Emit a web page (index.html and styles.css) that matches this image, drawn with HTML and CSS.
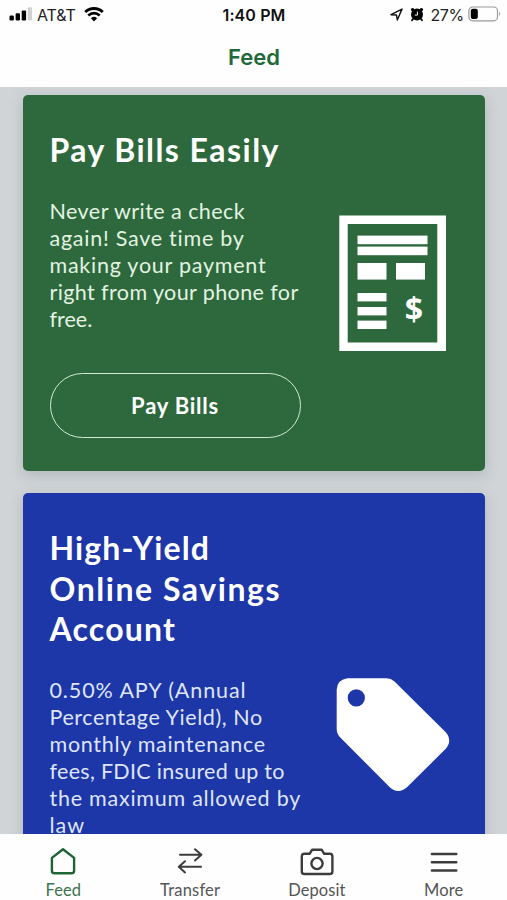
FILE: index.html
```html
<!DOCTYPE html>
<html lang="en">
<head>
    <meta charset="UTF-8">
    <meta name="viewport" content="width=device-width, initial-scale=1.0">
    <title>Feed</title>
    <link rel="stylesheet" href="styles.css">
</head>
<body>

<div class="app">
    <header class="header">
        <div class="status-bar">
            <div class="status-left">
                <svg class="signal" width="24" height="14" viewBox="0 0 24 14">
                    <rect x="0.5" y="8.5" width="4.4" height="5" rx="1.2"/>
                    <rect x="6.6" y="6.2" width="4.4" height="7.3" rx="1.2"/>
                    <rect x="12.7" y="3.4" width="4.4" height="10.1" rx="1.2"/>
                    <rect x="18.8" y="0.3" width="4.2" height="13.2" rx="1.2" fill="#d2d2d2"/>
                </svg>
                <span class="carrier">AT&amp;T</span>
                <svg class="wifi" width="20" height="15" viewBox="0 0 20 15">
                    <path d="M1.2 5.1A12.6 12.6 0 0 1 18.8 5.1" fill="none" stroke="#000" stroke-width="2.8"/>
                    <path d="M4.3 8.5A8.1 8.1 0 0 1 15.7 8.5" fill="none" stroke="#000" stroke-width="2.6"/>
                    <path d="M10 14.4L6.9 11.2A4.5 4.5 0 0 1 13.1 11.2Z"/>
                </svg>
            </div>
            <div class="clock">1:40 PM</div>
            <div class="status-right">
                <svg width="13" height="13" viewBox="0 0 13 13">
                    <path d="M1 6.7L12 1.1L7.3 12L6.5 7Z" fill="none" stroke="#111" stroke-width="1.4" stroke-linejoin="round"/>
                </svg>
                <svg class="alarm" width="14" height="15" viewBox="0 0 14 15">
                    <circle cx="7" cy="7.6" r="6"/>
                    <circle cx="2.6" cy="2.6" r="1.7"/>
                    <circle cx="11.4" cy="2.6" r="1.7"/>
                    <path d="M3 12L2 13.2M11 12L12 13.2" stroke="#000" stroke-width="1.8" stroke-linecap="round"/>
                    <path d="M7.4 4.6V8.1H4.8" fill="none" stroke="#fff" stroke-width="1"/>
                </svg>
                <span class="percent">27%</span>
                <svg class="battery" width="34" height="16" viewBox="0 0 34 16">
                    <rect x="0.9" y="1" width="28.6" height="13.8" rx="3.8" fill="none" stroke="#999" stroke-width="1.2"/>
                    <rect x="2.8" y="2.8" width="7" height="10.2" rx="2"/>
                    <path d="M31.3 5.6Q33.2 7.9 31.3 10.2Z" fill="#999"/>
                </svg>
            </div>
        </div>
        <h1 class="page-title">Feed</h1>
    </header>

    <main class="feed">
        <section class="card card-green">
            <div class="card-content">
                <h2><span class="t1">Pay Bills Easily</span></h2>
                <p>
                    <span class="a1">Never write a check</span><br>
                    <span class="a2">again! Save time by</span><br>
                    <span class="a3">making your payment</span><br>
                    <span class="a4">right from your phone for</span><br>
                    <span class="a5">free.</span>
                </p>
                <button class="btn" type="button">Pay Bills</button>
            </div>
            <div class="card-icon">
                <svg class="bill" width="108" height="136" viewBox="0 0 108 136">
                    <g fill="#fff">
                        <path fill-rule="evenodd" d="M0.3 0.6H107V136H0.3ZM8.7 9V127.6H98.3V9Z"/>
                        <rect x="18.5" y="20.6" width="70" height="8.6"/>
                        <rect x="18.5" y="31.6" width="70" height="8.6"/>
                        <rect x="18.5" y="48" width="29" height="16.6"/>
                        <rect x="57" y="48" width="29" height="16.6"/>
                        <rect x="18.5" y="78" width="29" height="8.4"/>
                        <rect x="18.5" y="92" width="29" height="8.4"/>
                        <rect x="18.5" y="105.6" width="29" height="8.4"/>
                    </g>
                    <text class="dollar" x="75" y="105.5" text-anchor="middle">$</text>
                </svg>
            </div>
        </section>

        <section class="card card-blue">
            <div class="card-content">
                <h2>
                    <span class="t2">High-Yield</span><br>
                    <span class="t3">Online Savings</span><br>
                    <span class="t4">Account</span>
                </h2>
                <p>
                    <span class="b1">0.50% APY (Annual</span><br>
                    <span class="b2">Percentage Yield), No</span><br>
                    <span class="b3">monthly maintenance</span><br>
                    <span class="b4">fees, FDIC insured up to</span><br>
                    <span class="b5">the maximum allowed by</span><br>
                    <span class="b6">law</span>
                </p>
            </div>
            <div class="card-icon">
                <svg class="tag" width="114" height="114" viewBox="0 0 114 114">
                    <path fill="#fff" fill-rule="evenodd" d="M11.5 0.3H50.5Q55 0.3 58.5 3.5L109.5 54Q113.2 58 113.2 62.5Q113.2 67 109.5 71L71 109.3Q67 113 62.3 113Q57.5 113 53.8 109.3L3.8 59Q0.7 55.8 0.7 51V11.5Q1.5 1.5 11.5 0.3ZM20.3 11.3A8.6 8.6 0 1 0 20.3 28.5A8.6 8.6 0 1 0 20.3 11.3Z"/>
                </svg>
            </div>
        </section>
    </main>

    <nav class="tab-bar">
        <a class="tab active">
            <svg width="32" height="32" viewBox="0 0 32 32">
                <path d="M4.9 11.9L16 3.2L27.1 11.9V24.7Q27.1 27.3 24.5 27.3H7.5Q4.9 27.3 4.9 24.7Z"/>
            </svg>
            <span>Feed</span>
        </a>
        <a class="tab">
            <svg class="thin" width="32" height="32" viewBox="0 0 32 32">
                <path d="M6 8.8H27.2M21 3.2L27.4 8.8L21 14.6M27 20.8H5M11 15.2L4.8 20.8L11 26.4"/>
            </svg>
            <span class="wide">Transfer</span>
        </a>
        <a class="tab">
            <svg width="34" height="32" viewBox="0 0 34 32">
                <path d="M4.4 7.8H9.6L12.2 3.7H21.6L24.2 7.8H29.8Q32.4 7.8 32.4 10.4V25.4Q32.4 28 29.8 28H4.4Q1.8 28 1.8 25.4V10.4Q1.8 7.8 4.4 7.8Z"/>
                <circle cx="17" cy="17.5" r="5.6"/>
            </svg>
            <span>Deposit</span>
        </a>
        <a class="tab">
            <svg width="32" height="32" viewBox="0 0 32 32">
                <path d="M3.9 8H28.3M3.9 16.2H28.3M3.9 24.5H28.3"/>
            </svg>
            <span>More</span>
        </a>
    </nav>
</div>

</body>
</html>
```
FILE: styles.css
```css
* {
    box-sizing: border-box;
}
body {
    margin: 0;
    font-family: 'Lato', 'Open Sans', sans-serif;
    background-color: #fff;
}
.app {
    display: flex;
    flex-direction: column;
    height: 900px;
    overflow: hidden;
}

/* header */
.header {
    flex: none;
    height: 87px;
    background-color: #fefefe;
    font-family: 'Inter', sans-serif;
}
.status-bar {
    display: grid;
    grid-template-columns: 1fr auto 1fr;
    align-items: center;
    height: 29px;
    padding: 0 5px 0 9px;
    font-size: 16px;
    color: #222;
}
.status-left,
.status-right {
    display: flex;
    align-items: center;
}
.status-right {
    justify-content: flex-end;
}
.signal {
    margin-bottom: 1px;
}
.carrier {
    margin: 0 8px 0 4px;
    letter-spacing: -0.1px;
}
.wifi {
    margin-bottom: 1px;
}
.clock {
    font-weight: 600;
    letter-spacing: 0.1px;
    margin-right: 3px;
    color: #111;
}
.alarm {
    margin: 0 6px 1px 7px;
}
.percent {
    margin-right: 4px;
    letter-spacing: -0.3px;
}
.battery {
    margin-bottom: 1px;
}
.page-title {
    margin: 14px 0 0 1px;
    font-size: 22px;
    line-height: 28px;
    font-weight: 600;
    text-align: center;
    color: #22693a;
}

/* feed */
.feed {
    flex: 1;
    min-height: 0;
    padding: 8px 22px 0 22.5px;
    overflow: hidden;
    background-color: #d0d4d7;
}
.card {
    display: flex;
    margin-bottom: 22px;
    padding: 35px 27px 34px;
    border-radius: 5px;
    color: #fff;
    box-shadow: 0 4px 14px rgba(90, 95, 105, 0.25);
}
.card-green {
    height: 376px;
    background-color: #2d693d;
}
.card-blue {
    height: 480px;
    background-color: #1d36a8;
}
.card-content {
    flex: none;
    width: 251px;
    white-space: nowrap;
}
.card h2 {
    margin: 0;
    font-size: 32px;
    line-height: 40.5px;
    font-weight: 700;
}
.card p {
    margin: 27px 0 40px;
    font-size: 21.5px;
    line-height: 27px;
}
.card-green p {
    color: #e4f3e2;
}
.card-blue p {
    color: #dfe5fb;
}

/* tracking per line */
.t1 { letter-spacing: 1.45px; }
.t2 { letter-spacing: 1.1px; }
.t3 { letter-spacing: 1.55px; }
.t4 { letter-spacing: 1.2px; }
.a1 { letter-spacing: 0.45px; }
.a2 { letter-spacing: 0.75px; }
.a3 { letter-spacing: 0.75px; }
.a4 { letter-spacing: 0.4px; }
.b1 { letter-spacing: 0.9px; }
.b2 { letter-spacing: 0.57px; }
.b3 { letter-spacing: 0.7px; }
.b4 { letter-spacing: 0.3px; }
.b5 { letter-spacing: 0.75px; }
.b6 { letter-spacing: 1px; }

.btn {
    width: 251px;
    height: 65px;
    border: 1.5px solid #d2ebd0;
    border-radius: 33px;
    background: none;
    font: 700 22px 'Lato', sans-serif;
    letter-spacing: 0.75px;
    color: #fff;
}
.card-icon {
    flex: 1;
    display: flex;
    justify-content: flex-end;
    align-items: flex-start;
}
.bill {
    margin: 85px 11px 0 0;
}
.tag {
    margin: 150px 8px 0 0;
}
.dollar {
    font: 700 32px 'Open Sans', sans-serif;
    fill: #fff;
}

/* bottom tabs */
.tab-bar {
    flex: none;
    display: flex;
    height: 66px;
    background-color: #fefefe;
}
.tab {
    flex: 1;
    display: flex;
    flex-direction: column;
    align-items: center;
    padding-top: 12px;
    font-size: 16.5px;
    line-height: 20px;
    letter-spacing: 0.1px;
    color: #555;
}
.tab .wide {
    letter-spacing: 0.2px;
}
.tab svg {
    flex: none;
    margin-bottom: 2px;
    fill: none;
    stroke: #3c3c3c;
    stroke-width: 2.4;
    stroke-linecap: round;
    stroke-linejoin: round;
}
.tab .thin {
    stroke-width: 2;
}
.tab.active {
    color: #39744d;
}
.tab.active svg {
    stroke: #1f6435;
}
```
